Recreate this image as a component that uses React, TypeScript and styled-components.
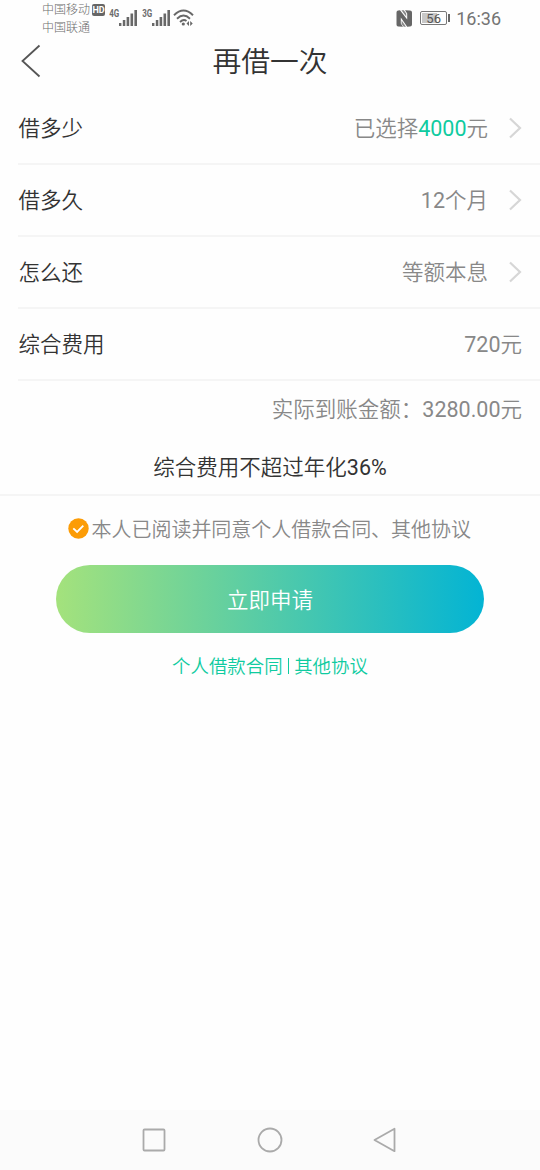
import React from 'react';
import styled, { createGlobalStyle } from 'styled-components';

const GlobalStyle = createGlobalStyle`
  * { box-sizing: border-box; }
  body { margin: 0; background: #fefefe; }
`;

const Screen = styled.div`
  width: 540px;
  height: 1170px;
  display: flex;
  flex-direction: column;
  overflow: hidden;
  background: #fefefe;
  color: #333;
  font-family: Roboto, 'Noto Sans CJK SC', sans-serif;
  font-size: 21.5px;
  font-weight: 350;
  white-space: nowrap;
`;

const StatusBar = styled.header`
  height: 36px;
  flex: none;
  display: flex;
  justify-content: space-between;
  padding: 0 39px 0 42px;
  color: #6c6c6c;
`;

const StatusGroup = styled.div`
  display: flex;
`;

const Carriers = styled.div`
  width: 64px;
  padding-top: 2px;
  font-size: 12px;
  font-weight: 300;
  line-height: 17.5px;
`;

const CarrierLine = styled.div`
  display: flex;
  height: 17.5px;
  gap: 2px;
`;

const HdBadge = styled.span`
  width: 13px;
  height: 12px;
  margin-top: 2px;
  border-radius: 2px;
  background: #666;
  color: #fff;
  font-size: 9px;
  font-weight: 700;
  line-height: 12px;
  text-align: center;
`;

const SignalBox = styled.div<{ $width: number }>`
  display: flex;
  width: ${(p) => p.$width}px;
  padding-top: 9px;
`;

const NetworkLabel = styled.span`
  width: 13px;
  padding-left: 4px;
  font-size: 10px;
  font-weight: 700;
  line-height: 10px;
  display: flex;
  transform: scaleX(0.8);
  transform-origin: left;
  height: 10px;
`;

const Drawing = styled.svg<{ $top?: number; $left?: number }>`
  display: block;
  flex: none;
  margin-top: ${(p) => p.$top ?? 0}px;
  margin-left: ${(p) => p.$left ?? 0}px;
  overflow: visible;
`;

const Battery = styled.div`
  display: flex;
  align-items: center;
  height: 14px;
  margin: 11px 0 0 8px;
`;

const BatteryCell = styled.div`
  width: 27px;
  height: 14px;
  border: 1px solid #777;
  border-radius: 2px;
  background: linear-gradient(to right, #c8c8c8 15px, transparent 15px) 1px 1px / 24px 10px no-repeat;
  color: #555;
  font-size: 13px;
  font-weight: 400;
  line-height: 13px;
  text-align: center;
`;

const BatteryTip = styled.span`
  width: 2px;
  height: 8px;
  margin-left: 1px;
  background: #666;
`;

const Clock = styled.time`
  margin-left: 6px;
  font-size: 18px;
  font-weight: 400;
  line-height: 38px;
  color: #747474;
`;

const TitleBar = styled.div`
  height: 57px;
  flex: none;
  display: grid;
  grid-template-columns: 60px 1fr 60px;
`;

const Title = styled.h1`
  margin: 0;
  color: #333;
  font-size: 28.8px;
  font-weight: 350;
  line-height: 52px;
  text-align: center;
`;

const Rows = styled.main`
  padding-left: 18px;
`;

const Row = styled.div`
  height: 72px;
  display: flex;
  align-items: center;
  justify-content: space-between;
  padding: 2px 18px 0 0.5px;
  border-bottom: 2px solid #f5f5f5;
  line-height: 30px;
`;

const Value = styled.div`
  display: flex;
  align-items: center;
  color: #888;
`;

const Digits = styled.span<{ $accent?: boolean }>`
  font-weight: 400;
  ${(p) => p.$accent && 'color: #0fcba0;'}
`;

const Received = styled.div`
  height: 57px;
  flex: none;
  padding-right: 18px;
  color: #888;
  line-height: 58px;
  text-align: right;
`;

const RateNote = styled.div`
  height: 58px;
  flex: none;
  border-bottom: 2px solid #f5f5f5;
  line-height: 60px;
  text-align: center;
`;

const Consent = styled.label`
  display: flex;
  align-items: center;
  justify-content: center;
  gap: 3px;
  height: 66px;
  padding: 0 1.5px 2px 0;
  color: #888;
  font-size: 19.98px;
`;

const ApplyButton = styled.button`
  width: 428px;
  height: 68px;
  flex: none;
  margin: 3px 0 0 56px;
  padding: 0 0 1px;
  border: 0;
  border-radius: 34px;
  background: linear-gradient(to right, #a4e27c, #03b4d4);
  color: #fff;
  font: inherit;
`;

const Links = styled.nav`
  height: 64px;
  padding-bottom: 1px;
  display: flex;
  align-items: center;
  justify-content: center;
  gap: 5px;
  color: #0fcba0;
  font-size: 18.45px;
`;

const Divider = styled.span`
  width: 1.5px;
  height: 16px;
  margin-top: 2px;
  background: currentColor;
`;

const NavBar = styled.footer`
  height: 60px;
  flex: none;
  margin-top: auto;
  display: flex;
  align-items: center;
  justify-content: center;
  gap: 90px;
  background: #fbfbfb;
`;

const Signal = () => (
  <Drawing width="18" height="17" viewBox="0 0 18 17" fill="#686868">
    <rect x="0" y="14" width="2.4" height="3" />
    <rect x="3.8" y="11" width="2.5" height="6" />
    <rect x="7.6" y="8" width="2.6" height="9" />
    <rect x="11.5" y="4.5" width="2.6" height="12.5" />
    <rect x="15.4" y="1" width="2.6" height="16" />
  </Drawing>
);

const Chevron = () => (
  <Drawing $left={20} $top={-2} width="14" height="22" viewBox="0 0 14 22" fill="none" stroke="#d6d6d6" strokeWidth="2.2">
    <path d="M2 1.5 12 11 2 20.5" />
  </Drawing>
);

const options = [
  { label: '借多少', value: <>已选择<Digits $accent>4000</Digits>元</> },
  { label: '借多久', value: <><Digits>12</Digits>个月</> },
  { label: '怎么还', value: <>等额本息</> },
];

export default function App() {
  return (
    <Screen lang="zh-CN">
      <GlobalStyle />
      <StatusBar>
        <StatusGroup>
          <Carriers>
            <CarrierLine>中国移动<HdBadge>HD</HdBadge></CarrierLine>
            <CarrierLine>中国联通</CarrierLine>
          </Carriers>
          <SignalBox $width={33}><NetworkLabel>4G</NetworkLabel><Signal /></SignalBox>
          <SignalBox $width={33}><NetworkLabel>3G</NetworkLabel><Signal /></SignalBox>
          <Drawing $top={9} $left={1} width="22" height="18" viewBox="0 0 22 18" fill="none" stroke="#686868" strokeWidth="1.9">
            <path d="M1 6.2Q10.5-3.2 20 6.2M4 9.7Q10.5 3.5 17 9.7M7 13Q10.5 9.7 13.5 12" />
            <circle cx="10.3" cy="15" r="1.6" fill="#686868" stroke="none" />
            <path d="m16 12-2.5 2.5 2.5 2.5Zm1.2 0 2.5 2.5-2.5 2.5Z" fill="#686868" stroke="none" />
          </Drawing>
        </StatusGroup>
        <StatusGroup>
          <Drawing $top={10} width="17" height="17" viewBox="0 0 17 17">
            <path d="M3.2.5 5 .3l7.2 9.2V3.4L10 .3l5 .2Q17 .7 17 2.5v12q0 1.8-2 2l-2.8.2L5.8 7.5v6.1L8 16.7l-4.8-.2Q1.5 16.3 1.5 14.5v-12Q1.5.7 3.2.5Z" fill="#666" />
            <path d="M6.5.3h2.3l2.4 3.1v3.1ZM11 16.7H8.8l-2.2-2.8v-3.4Z" fill="#888" />
          </Drawing>
          <Battery><BatteryCell>56</BatteryCell><BatteryTip /></Battery>
          <Clock>16:36</Clock>
        </StatusGroup>
      </StatusBar>

      <TitleBar>
        <Drawing $top={9} $left={21} width="20" height="32" viewBox="0 0 20 32" fill="none" stroke="#555" strokeWidth="1.8">
          <path d="M18.5.5 1.5 16l17 15.5" />
        </Drawing>
        <Title>再借一次</Title>
      </TitleBar>

      <Rows>
        {options.map((o) => (
          <Row key={o.label}>
            <span>{o.label}</span>
            <Value><span>{o.value}</span><Chevron /></Value>
          </Row>
        ))}
        <Row>
          <span>综合费用</span>
          <Value><span><Digits>720</Digits>元</span></Value>
        </Row>
      </Rows>

      <Received>实际到账金额：<Digits>3280.00</Digits>元</Received>
      <RateNote>综合费用不超过年化<Digits>36%</Digits></RateNote>

      <Consent>
        <Drawing width="21" height="21" viewBox="0 0 21 21">
          <circle cx="10.5" cy="10.5" r="10.2" fill="#fc9c06" />
          <path d="m5.3 10.3 3.8 3.7 6.2-6.3" fill="none" stroke="#fff" strokeWidth="1.8" />
        </Drawing>
        <span>本人已阅读并同意个人借款合同、其他协议</span>
      </Consent>
      <ApplyButton>立即申请</ApplyButton>
      <Links>
        <span>个人借款合同</span>
        <Divider />
        <span>其他协议</span>
      </Links>

      <NavBar>
        <Drawing width="26" height="26" viewBox="0 0 26 26" fill="none" stroke="#aaa" strokeWidth="1.8">
          <rect x="2.5" y="2.5" width="21" height="21" rx="1" />
        </Drawing>
        <Drawing width="26" height="26" viewBox="0 0 26 26" fill="none" stroke="#aaa" strokeWidth="1.8">
          <circle cx="13" cy="13" r="11.5" />
        </Drawing>
        <Drawing width="26" height="26" viewBox="0 0 26 26" fill="none" stroke="#aaa" strokeWidth="1.8" strokeLinejoin="round">
          <path d="M21.5 1.8v22.4L1.5 13Z" />
        </Drawing>
      </NavBar>
    </Screen>
  );
}
